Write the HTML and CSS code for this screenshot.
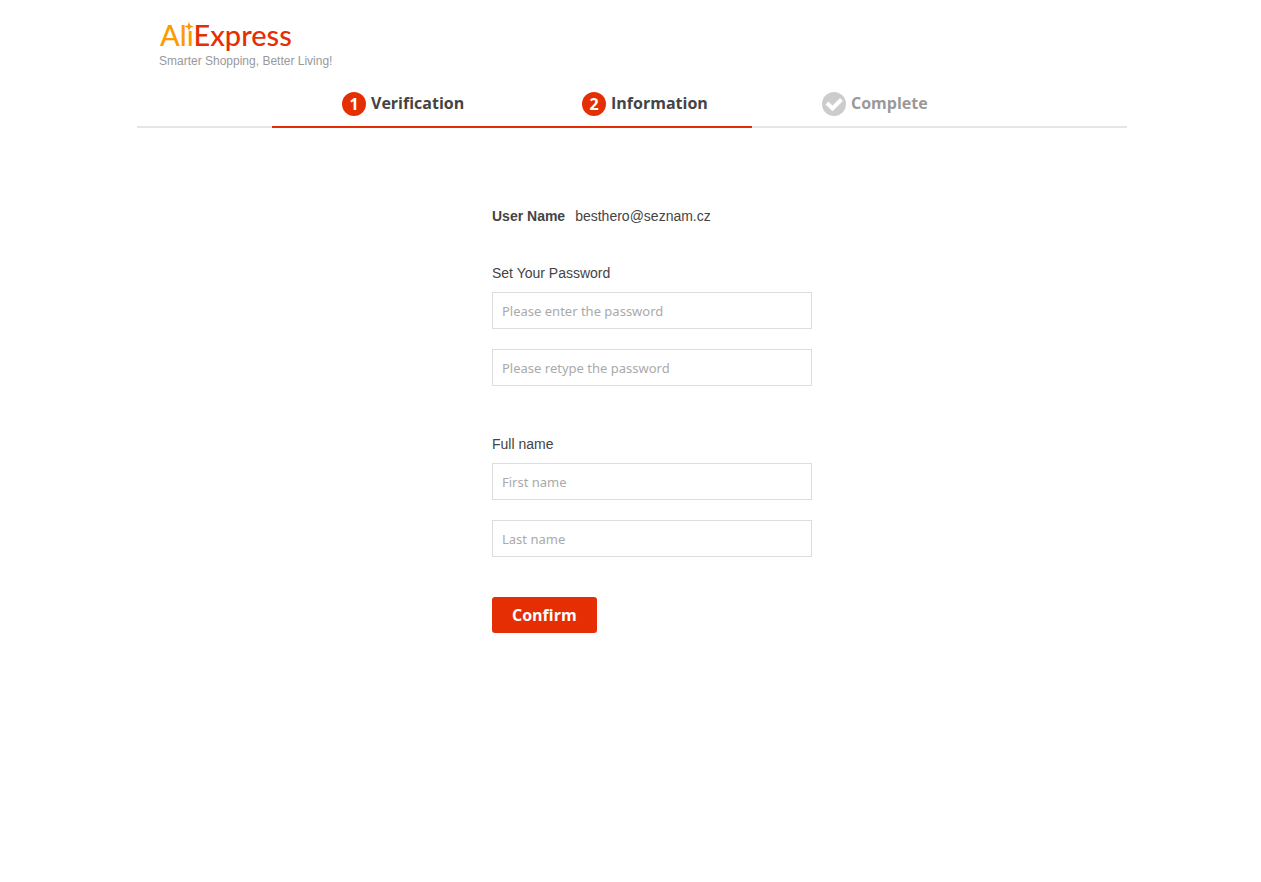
FILE: index.html
```html
<!DOCTYPE html>
<html lang="en">
<head>
<meta charset="utf-8">
<title>AliExpress - Account Information</title>
<link rel="stylesheet" href="styles.css">
</head>
<body>
<div class="page">
  <header class="header">
    <div class="logo"><span class="logo-ali">Ali</span><span class="logo-express">Express</span>
      <svg class="logo-star" viewBox="0 0 10 9" aria-hidden="true"><path d="M1 2H8V9H1Z" fill="#fff"/><path d="M5 0L6.300 3.200L9.500 4.500L6.300 5.800L5 9L3.700 5.800L.5 4.500L3.700 3.200Z" fill="#ff9900"/></svg>
    </div>
    <p class="tagline">Smarter Shopping, Better Living!</p>
  </header>
  <ol class="steps">
    <li class="step step-active"><span class="badge">1</span><span>Verification</span></li>
    <li class="step step-active"><span class="badge">2</span><span>Information</span></li>
    <li class="step"><svg class="badge-check" viewBox="0 0 24 24" aria-hidden="true"><circle cx="12" cy="12" r="12" fill="#ccc"/><path d="M5 11L10.500 16.500L19.500 7.500" fill="none" stroke="#fff" stroke-width="4"/></svg><span>Complete</span></li>
  </ol>
  <form class="form">
    <div class="user"><strong>User Name</strong><span>besthero@seznam.cz</span></div>
    <div class="group">
      <label class="label" for="password">Set Your Password</label>
      <input class="field" id="password" type="password" placeholder="Please enter the password">
      <input class="field" id="password2" type="password" aria-label="Retype password" placeholder="Please retype the password">
    </div>
    <div class="group">
      <label class="label" for="first">Full name</label>
      <input class="field" id="first" type="text" placeholder="First name">
      <input class="field" id="last" type="text" aria-label="Last name" placeholder="Last name">
    </div>
    <button class="confirm" type="submit">Confirm</button>
  </form>
</div>
</body>
</html>
```
FILE: styles.css
```css
* { box-sizing: border-box; }
body {
  margin: 0;
  padding-left: 3px;
  background: #fff;
  color: #444;
  font: 14px/20px "Liberation Sans", Arial, sans-serif;
}
.page { max-width: 990px; margin: 0 auto; }
.header { padding: 20px 22px 0; }
.logo {
  position: relative;
  width: max-content;
  margin-left: 1px;
  padding-bottom: 2px;
  font: 500 29px/30px "Lato", sans-serif;
}
.logo-ali { color: #ff9900; }
.logo-express { color: #e62e04; }
.logo-star { position: absolute; left: 24px; top: 2px; width: 10px; height: 9px; }
.tagline { margin: 0; color: #999; font-size: 12px; line-height: 18px; }
.steps {
  display: flex;
  justify-content: center;
  margin: 20px 0 0;
  padding: 0;
  list-style: none;
  border-bottom: 2px solid #e5e5e5;
}
.step {
  display: flex;
  align-items: flex-start;
  gap: 5px;
  width: 240px;
  height: 38px;
  margin-bottom: -2px;
  padding: 2px 0 0 70px;
  color: #999;
  font: 700 16px/22px "Open Sans", sans-serif;
}
.step-active { color: #444; border-bottom: 2px solid #e62e04; }
.badge {
  width: 24px;
  height: 24px;
  border-radius: 50%;
  background: #e62e04;
  color: #fff;
  line-height: 24px;
  text-align: center;
}
.badge-check { width: 24px; height: 24px; }
.form {
  box-sizing: content-box;
  max-width: 320px;
  margin: 78px auto 0;
  padding-left: 40px;
}
.user { display: flex; gap: 10px; margin-bottom: 37px; }
.group { margin-bottom: 40px; }
.group + .group { margin-top: 48px; }
.label { display: block; margin-bottom: 9px; }
.field {
  display: block;
  width: 100%;
  height: 37px;
  margin-bottom: 20px;
  padding: 0 9px;
  border: 1px solid #ddd;
  background: #fff;
  color: #444;
  font: 13px "Noto Sans", sans-serif;
}
.field::placeholder { color: #aaa; opacity: 1; }
.confirm {
  height: 36px;
  padding: 0 20px;
  border: 0;
  border-radius: 3px;
  background: #e62e04;
  color: #fff;
  font: 700 16px "Open Sans", sans-serif;
}
```
